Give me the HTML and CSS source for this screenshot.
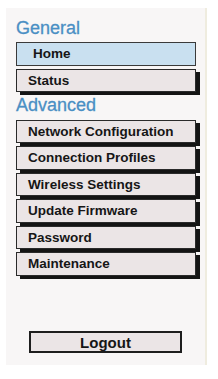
FILE: index.html
```html
<!DOCTYPE html>
<html>
<head>
<meta charset="utf-8">
<link rel="stylesheet" href="styles.css">
</head>
<body>
<nav class="panel">
  <div class="heading">General</div>
  <a class="btn selected">Home</a>
  <a class="btn">Status</a>
  <div class="heading adv">Advanced</div>
  <a class="btn">Network Configuration</a>
  <a class="btn">Connection Profiles</a>
  <a class="btn">Wireless Settings</a>
  <a class="btn">Update Firmware</a>
  <a class="btn">Password</a>
  <a class="btn">Maintenance</a>
  <a class="logout">Logout</a>
</nav>
</body>
</html>
```

FILE: styles.css
```css
html, body {
  margin: 0;
  padding: 0;
  background: #ffffff;
}
body {
  font-family: "Liberation Sans", Arial, sans-serif;
  padding: 8px 0 0 6px;
}
.panel {
  box-sizing: border-box;
  width: 201px;
  height: 357px;
  background: #f8f6f6;
  border-right: 2px solid #efecdf;
  padding: 10px 0 0 10px;
  display: flex;
  flex-direction: column;
}
.heading {
  font-size: 18px;
  line-height: 20px;
  height: 20px;
  color: #4a8fc4;
  margin-bottom: 4px;
  -webkit-text-stroke: 0.3px #4a8fc4;
}
.heading.adv {
  margin-top: 0;
  margin-bottom: 4.5px;
}
.btn {
  box-sizing: border-box;
  display: flex;
  align-items: center;
  width: 180px;
  height: 23.5px;
  padding-left: 11px;
  margin-bottom: 3px;
  background: #ebe5e6;
  border: 1px solid #2a2a2a;
  box-shadow: 4px 3px 0 #141414;
  color: #161616;
  font-weight: bold;
  font-size: 13.5px;
  flex-shrink: 0;
}
.btn.selected {
  background: #c9e0f0;
  box-shadow: none;
  padding-left: 16px;
  border-color: #3a3a3a;
}
.logout {
  box-sizing: border-box;
  display: flex;
  align-items: center;
  justify-content: center;
  width: 153px;
  height: 22px;
  margin: auto 0 12px 13px;
  background: #ebe5e6;
  border: 2px solid #1e1e1e;
  color: #161616;
  font-weight: bold;
  font-size: 15px;
}
```
